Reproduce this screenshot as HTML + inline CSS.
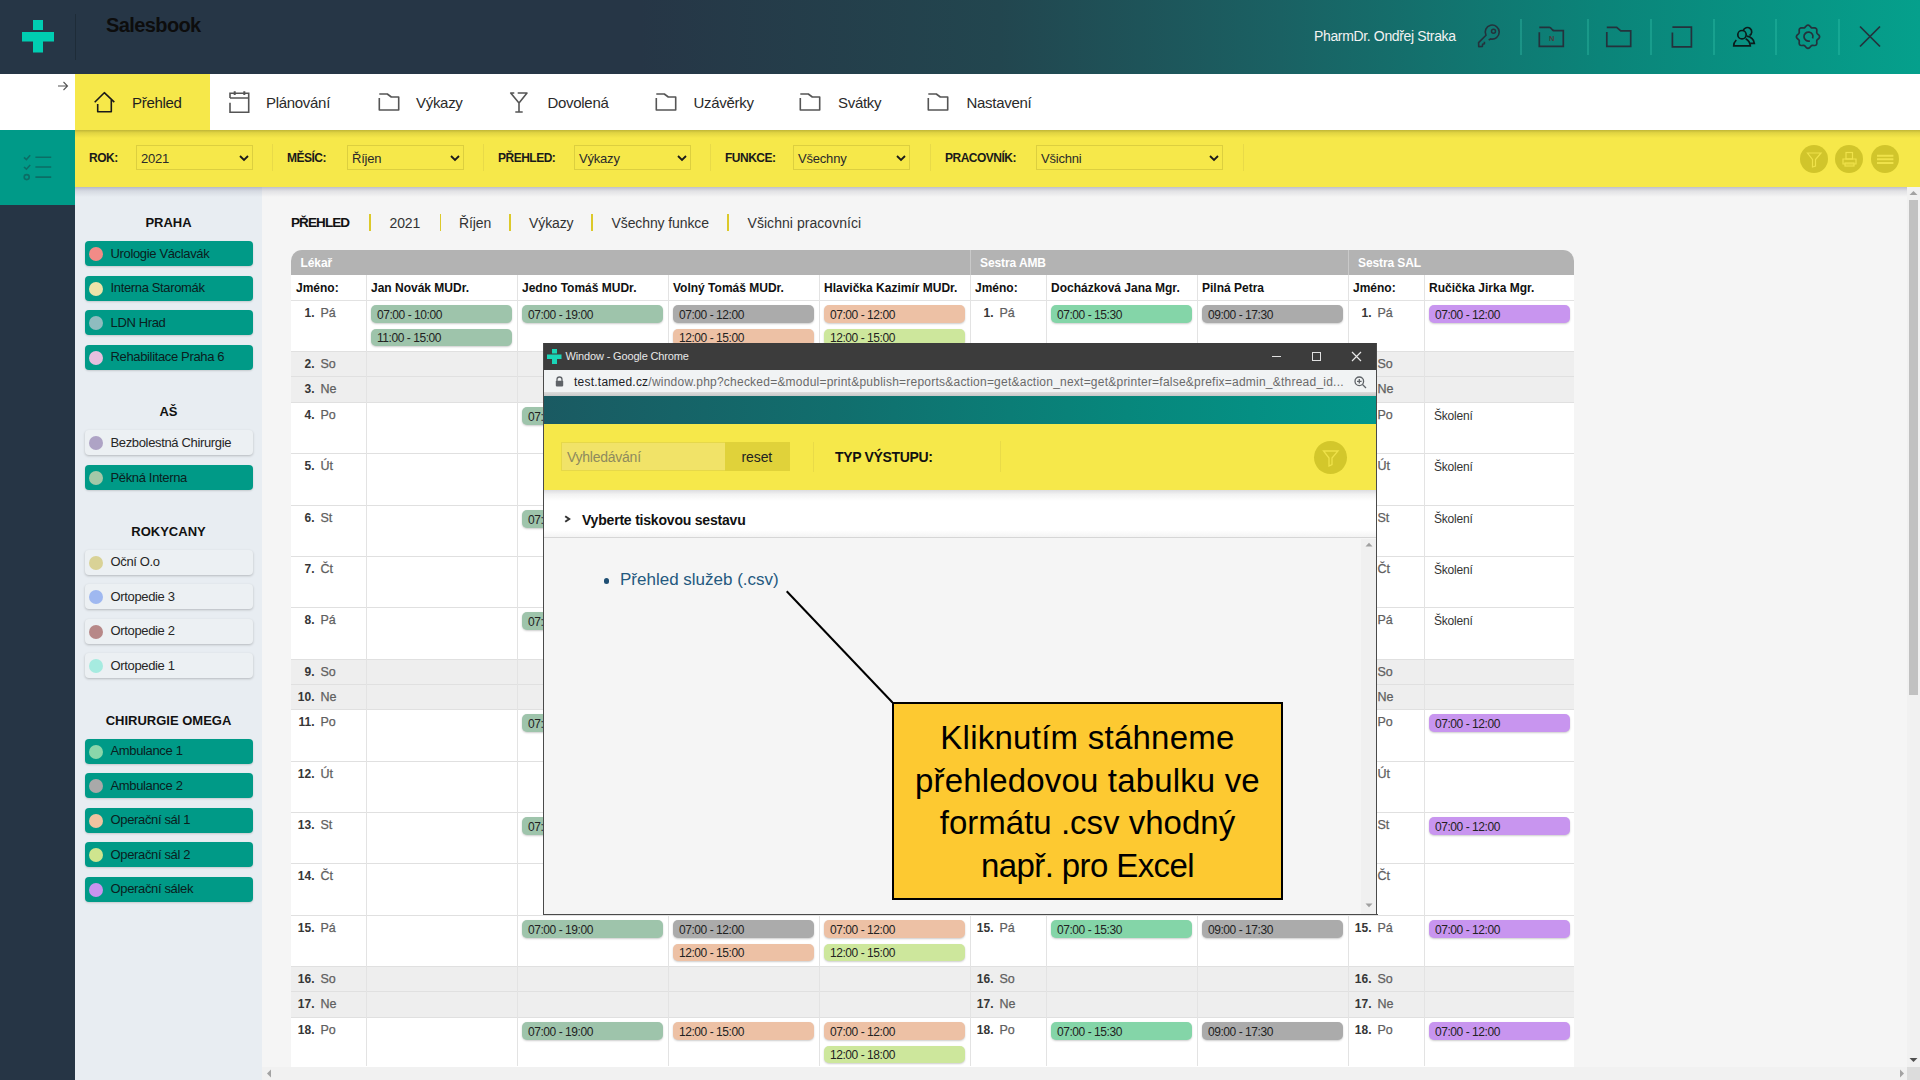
<!DOCTYPE html><html><head><meta charset="utf-8"><style>
html,body{margin:0;padding:0;}
body{width:1920px;height:1080px;overflow:hidden;position:relative;font-family:"Liberation Sans",sans-serif;background:#f5f5f5;}
.t{position:absolute;white-space:nowrap;line-height:1;}
.r{position:absolute;}
svg{position:absolute;overflow:visible;}
</style></head><body>
<div class="r" style="left:0px;top:0px;width:1920px;height:74px;background:linear-gradient(90deg,#263646 0px,#263646 640px,#22464f 1000px,#1a6163 1280px,#0b8479 1600px,#05a08c 1920px);"></div>
<svg style="left:0;top:0" width="80" height="74"><g fill="#00cdb1"><rect x="33" y="20" width="10" height="10"/><rect x="22" y="32" width="32" height="9.5"/><rect x="33" y="41" width="10" height="11.5"/></g></svg>
<div class="r" style="left:75px;top:14px;width:1px;height:46px;background:#1e2c38;"></div>
<div class="t" style="left:106px;top:14.57px;font-size:20px;font-weight:700;color:#0d0d0d;letter-spacing:-0.6px;">Salesbook</div>
<div class="t" style="left:1314px;top:29.45px;font-size:14px;font-weight:400;color:#f2f2f2;letter-spacing:-0.35px;">PharmDr. Ondřej Straka</div>
<div class="r" style="left:1519.5px;top:19px;width:2px;height:36px;background:rgba(60,205,180,0.3);"></div>
<div class="r" style="left:1586.5px;top:19px;width:2px;height:36px;background:rgba(60,205,180,0.3);"></div>
<div class="r" style="left:1649.5px;top:19px;width:2px;height:36px;background:rgba(60,205,180,0.3);"></div>
<div class="r" style="left:1712.5px;top:19px;width:2px;height:36px;background:rgba(60,205,180,0.3);"></div>
<div class="r" style="left:1774.5px;top:19px;width:2px;height:36px;background:rgba(60,205,180,0.3);"></div>
<div class="r" style="left:1837.5px;top:19px;width:2px;height:36px;background:rgba(60,205,180,0.3);"></div>
<svg style="left:1470px;top:18px" width="40" height="36" viewBox="0 0 40 36"><path d="M18.7 22 L20.6 20.9 A7 7 0 1 0 16 17.3 L8.6 24.6 L8.7 28.6 L12.4 28.4 L12.6 26.3 L14.4 25.8 L14.4 23.8" fill="none" stroke="#24323c" stroke-width="1.6" stroke-linejoin="round"/><circle cx="23.5" cy="13.3" r="2" fill="none" stroke="#24323c" stroke-width="1.5"/></svg>
<svg style="left:1530px;top:18px" width="40" height="36" viewBox="0 0 40 36"><path d="M9.3 9.3 H19.3 Q20.5 9.3 21.5 10.8 L22.5 12 Q23.3 12.7 24.5 12.7 H33.3 V28.3 H9.3 V14.3" fill="none" stroke="#24323c" stroke-width="1.7"/><text x="21.7" y="22.8" text-anchor="middle" font-size="7.5" font-weight="700" fill="#4a3c3c" font-family="Liberation Sans">N</text></svg>
<svg style="left:1600px;top:18px" width="40" height="36" viewBox="0 0 40 36"><path d="M6.8 9.4 H16.7 L20.8 12.8 H30.7 V28.4 H6.8 V14.1" fill="none" stroke="#24323c" stroke-width="1.7"/></svg>
<svg style="left:1660px;top:18px" width="40" height="36" viewBox="0 0 40 36"><path d="M12.4 9.1 H31.4 V28.9 H12.4 V14.6" fill="none" stroke="#24323c" stroke-width="1.7"/></svg>
<svg style="left:1724px;top:18px" width="40" height="36" viewBox="0 0 40 36"><g fill="none" stroke="#0b1c1c" stroke-width="1.7"><path d="M19.3 12.6 A4.3 4.3 0 1 1 25.5 17.6"/><circle cx="18" cy="16.7" r="4.2"/><path d="M12.3 22 Q9.7 24.5 9.7 27.9 H26.3 Q26 23 21.7 20.7"/><path d="M23 18.2 Q29.5 19.5 30.3 25.3 H26.3"/></g></svg>
<svg style="left:1788px;top:18px" width="40" height="36" viewBox="0 0 40 36"><g fill="none" stroke="#24323c" stroke-width="1.7"><path d="M20.00,7.10 L20.75,7.26 L21.45,7.69 L22.07,8.30 L22.61,8.94 L23.13,9.48 L23.67,9.83 L24.31,9.97 L25.05,9.95 L25.89,9.89 L26.76,9.89 L27.56,10.08 L28.20,10.50 L28.62,11.14 L28.81,11.94 L28.81,12.81 L28.75,13.65 L28.73,14.39 L28.87,15.03 L29.22,15.57 L29.76,16.09 L30.40,16.63 L31.01,17.25 L31.44,17.95 L31.60,18.70 L31.44,19.45 L31.01,20.15 L30.40,20.77 L29.76,21.31 L29.22,21.83 L28.87,22.37 L28.73,23.01 L28.75,23.75 L28.81,24.59 L28.81,25.46 L28.62,26.26 L28.20,26.90 L27.56,27.32 L26.76,27.51 L25.89,27.51 L25.05,27.45 L24.31,27.43 L23.67,27.57 L23.13,27.92 L22.61,28.46 L22.07,29.10 L21.45,29.71 L20.75,30.14 L20.00,30.30 L19.25,30.14 L18.55,29.71 L17.93,29.10 L17.39,28.46 L16.87,27.92 L16.33,27.57 L15.69,27.43 L14.95,27.45 L14.11,27.51 L13.24,27.51 L12.44,27.32 L11.80,26.90 L11.38,26.26 L11.19,25.46 L11.19,24.59 L11.25,23.75 L11.27,23.01 L11.13,22.37 L10.78,21.83 L10.24,21.31 L9.60,20.77 L8.99,20.15 L8.56,19.45 L8.40,18.70 L8.56,17.95 L8.99,17.25 L9.60,16.63 L10.24,16.09 L10.78,15.57 L11.13,15.03 L11.27,14.39 L11.25,13.65 L11.19,12.81 L11.19,11.94 L11.38,11.14 L11.80,10.50 L12.44,10.08 L13.24,9.89 L14.11,9.89 L14.95,9.95 L15.69,9.97 L16.33,9.83 L16.87,9.48 L17.39,8.94 L17.93,8.30 L18.55,7.69 L19.25,7.26 L20.00,7.10 Z"/><path d="M24.6 20.4 A4.5 4.5 0 1 0 21.8 22.9"/></g></svg>
<svg style="left:1859px;top:26px" width="22" height="21" viewBox="0 0 22 21"><path d="M1 0.5 L21 20.5 M21 0.5 L1 20.5" stroke="#24323c" stroke-width="1.7"/></svg>
<div class="r" style="left:0px;top:74px;width:1920px;height:56px;background:#ffffff;"></div>
<div class="r" style="left:75px;top:74px;width:135px;height:56px;background:#f6e84a;"></div>
<svg style="left:57px;top:81px" width="12" height="10" viewBox="0 0 12 10"><path d="M1 5 H10.5 M6.5 1 L10.5 5 L6.5 9" fill="none" stroke="#555" stroke-width="1.1"/></svg>
<svg style="left:88px;top:84px" width="36" height="36" viewBox="0 0 36 36"><path d="M6.7 18.3 L16.3 8.7 L26.3 18.2 M9.7 20 V27.7 H23.3 V16" fill="none" stroke="#1a1a1a" stroke-width="1.6" stroke-linejoin="round"/></svg>
<div class="t" style="left:132px;top:94.80px;font-size:15px;font-weight:400;color:#1e1e1e;letter-spacing:-0.3px;">Přehled</div>
<svg style="left:222px;top:84px" width="36" height="36" viewBox="0 0 36 36"><g fill="none" stroke="#555555" stroke-width="1.6"><path d="M8 14 V9.3 H26.7 V28.3 H8 V18.7 M8 14 H26.7"/><path d="M12.7 7.3 V11 M22.3 7.3 V11" stroke-width="2"/></g></svg>
<div class="t" style="left:266px;top:94.80px;font-size:15px;font-weight:400;color:#2a2a2a;letter-spacing:-0.3px;">Plánování</div>
<svg style="left:370.0px;top:84px" width="36" height="36" viewBox="0 0 36 36"><path d="M9.3 10 H17.3 L21.3 13 H28.7 V26 H9.3 V14" fill="none" stroke="#555555" stroke-width="1.6" stroke-linejoin="round"/></svg>
<div class="t" style="left:416px;top:94.80px;font-size:15px;font-weight:400;color:#2a2a2a;letter-spacing:-0.3px;">Výkazy</div>
<svg style="left:500px;top:84px" width="36" height="36" viewBox="0 0 36 36"><path d="M14.3 9 H10.7 L19 19 L27 9 H17.7 M19 19 V28 M15.3 28 H22.7" fill="none" stroke="#555555" stroke-width="1.6" stroke-linejoin="round"/></svg>
<div class="t" style="left:547.5px;top:94.80px;font-size:15px;font-weight:400;color:#2a2a2a;letter-spacing:-0.3px;">Dovolená</div>
<svg style="left:646.7px;top:84px" width="36" height="36" viewBox="0 0 36 36"><path d="M9.3 10 H17.3 L21.3 13 H28.7 V26 H9.3 V14" fill="none" stroke="#555555" stroke-width="1.6" stroke-linejoin="round"/></svg>
<div class="t" style="left:693.5px;top:94.80px;font-size:15px;font-weight:400;color:#2a2a2a;letter-spacing:-0.3px;">Uzávěrky</div>
<svg style="left:790.7px;top:84px" width="36" height="36" viewBox="0 0 36 36"><path d="M9.3 10 H17.3 L21.3 13 H28.7 V26 H9.3 V14" fill="none" stroke="#555555" stroke-width="1.6" stroke-linejoin="round"/></svg>
<div class="t" style="left:838px;top:94.80px;font-size:15px;font-weight:400;color:#2a2a2a;letter-spacing:-0.3px;">Svátky</div>
<svg style="left:919.1px;top:84px" width="36" height="36" viewBox="0 0 36 36"><path d="M9.3 10 H17.3 L21.3 13 H28.7 V26 H9.3 V14" fill="none" stroke="#555555" stroke-width="1.6" stroke-linejoin="round"/></svg>
<div class="t" style="left:966.5px;top:94.80px;font-size:15px;font-weight:400;color:#2a2a2a;letter-spacing:-0.3px;">Nastavení</div>
<div class="r" style="left:0px;top:130px;width:75px;height:75px;background:#009a88;"></div>
<div class="r" style="left:0px;top:205px;width:75px;height:875px;background:#263545;"></div>
<svg style="left:15px;top:145px" width="45" height="45" viewBox="0 0 45 45"><g fill="none" stroke="#0b6e66" stroke-width="1.6"><path d="M9 12.3 L11.4 14.5 L15.2 10.3"/><path d="M9 22 L11.4 24.2 L15.2 20"/><circle cx="11.7" cy="32.1" r="2.5"/><path d="M20.4 12.3 H36.2 M20.4 22 H36.2 M20.4 32.1 H36.2"/></g></svg>
<div class="r" style="left:75px;top:187px;width:187px;height:893px;background:#e8edf2;"></div>
<div class="r" style="left:262px;top:187px;width:1658px;height:893px;background:#f5f5f5;"></div>
<div class="r" style="left:75px;top:130px;width:1845px;height:57px;background:#f6e84a;"></div>
<div class="r" style="left:75px;top:130px;width:1845px;height:8px;background:linear-gradient(rgba(40,40,0,0.26),rgba(40,40,0,0.10) 35%,rgba(0,0,0,0));"></div>
<div class="r" style="left:75px;top:187px;width:1845px;height:10px;background:linear-gradient(rgba(50,50,90,0.28),rgba(50,50,80,0.10) 40%,rgba(0,0,0,0));"></div>
<div class="t" style="left:89px;top:152.34px;font-size:12px;font-weight:700;color:#1a1a1a;letter-spacing:-0.5px;">ROK:</div>
<div class="r" style="left:136px;top:145px;width:117px;height:25px;box-sizing:border-box;border:1px solid #dccf3f;background:#f6e84a;"></div>
<div class="t" style="left:141px;top:151.50px;font-size:13px;font-weight:400;color:#2a2a2a;letter-spacing:-0.2px;">2021</div>
<svg style="left:239px;top:155px" width="10" height="7" viewBox="0 0 10 7"><path d="M1 1 L5 5 L9 1" fill="none" stroke="#1a1a1a" stroke-width="1.8"/></svg>
<div class="t" style="left:287px;top:152.34px;font-size:12px;font-weight:700;color:#1a1a1a;letter-spacing:-0.5px;">MĚSÍC:</div>
<div class="r" style="left:347px;top:145px;width:117px;height:25px;box-sizing:border-box;border:1px solid #dccf3f;background:#f6e84a;"></div>
<div class="t" style="left:352px;top:151.50px;font-size:13px;font-weight:400;color:#2a2a2a;letter-spacing:-0.2px;">Říjen</div>
<svg style="left:450px;top:155px" width="10" height="7" viewBox="0 0 10 7"><path d="M1 1 L5 5 L9 1" fill="none" stroke="#1a1a1a" stroke-width="1.8"/></svg>
<div class="t" style="left:498px;top:152.34px;font-size:12px;font-weight:700;color:#1a1a1a;letter-spacing:-0.5px;">PŘEHLED:</div>
<div class="r" style="left:574px;top:145px;width:117px;height:25px;box-sizing:border-box;border:1px solid #dccf3f;background:#f6e84a;"></div>
<div class="t" style="left:579px;top:151.50px;font-size:13px;font-weight:400;color:#2a2a2a;letter-spacing:-0.2px;">Výkazy</div>
<svg style="left:677px;top:155px" width="10" height="7" viewBox="0 0 10 7"><path d="M1 1 L5 5 L9 1" fill="none" stroke="#1a1a1a" stroke-width="1.8"/></svg>
<div class="t" style="left:725px;top:152.34px;font-size:12px;font-weight:700;color:#1a1a1a;letter-spacing:-0.5px;">FUNKCE:</div>
<div class="r" style="left:793px;top:145px;width:117px;height:25px;box-sizing:border-box;border:1px solid #dccf3f;background:#f6e84a;"></div>
<div class="t" style="left:798px;top:151.50px;font-size:13px;font-weight:400;color:#2a2a2a;letter-spacing:-0.2px;">Všechny</div>
<svg style="left:896px;top:155px" width="10" height="7" viewBox="0 0 10 7"><path d="M1 1 L5 5 L9 1" fill="none" stroke="#1a1a1a" stroke-width="1.8"/></svg>
<div class="t" style="left:945px;top:152.34px;font-size:12px;font-weight:700;color:#1a1a1a;letter-spacing:-0.5px;">PRACOVNÍK:</div>
<div class="r" style="left:1036px;top:145px;width:187px;height:25px;box-sizing:border-box;border:1px solid #dccf3f;background:#f6e84a;"></div>
<div class="t" style="left:1041px;top:151.50px;font-size:13px;font-weight:400;color:#2a2a2a;letter-spacing:-0.2px;">Všichni</div>
<svg style="left:1209px;top:155px" width="10" height="7" viewBox="0 0 10 7"><path d="M1 1 L5 5 L9 1" fill="none" stroke="#1a1a1a" stroke-width="1.8"/></svg>
<div class="r" style="left:272px;top:144px;width:1px;height:27px;background:#e8da48;"></div>
<div class="r" style="left:483px;top:144px;width:1px;height:27px;background:#e8da48;"></div>
<div class="r" style="left:710px;top:144px;width:1px;height:27px;background:#e8da48;"></div>
<div class="r" style="left:930px;top:144px;width:1px;height:27px;background:#e8da48;"></div>
<div class="r" style="left:1243px;top:144px;width:1px;height:27px;background:#e8da48;"></div>
<svg style="left:1799.5px;top:145px" width="28" height="28" viewBox="0 0 28 28"><circle cx="14" cy="14" r="14" fill="#d1c52b"/><path d="M7.5 8 H21 L15.5 14.5 V21 L12.5 22 V14.5 Z" fill="none" stroke="#efe24a" stroke-width="1.2"/></svg>
<svg style="left:1834.5px;top:145px" width="28" height="28" viewBox="0 0 28 28"><circle cx="14" cy="14" r="14" fill="#d1c52b"/><g fill="none" stroke="#efe24a" stroke-width="1.2"><rect x="11" y="7.5" width="6.5" height="6.5"/><path d="M8 14 H21 V19 H8 Z"/><rect x="10" y="18" width="9" height="3"/></g></svg>
<svg style="left:1871px;top:145px" width="28" height="28" viewBox="0 0 28 28"><circle cx="14" cy="14" r="14" fill="#d1c52b"/><g stroke="#efe24a" stroke-width="1.9"><path d="M6 10.8 H22.4 M6 14.3 H22.4 M6 18 H22.4"/></g></svg>
<div class="t" style="left:168.5px;top:216.00px;font-size:13px;font-weight:700;color:#111;letter-spacing:0px;transform:translateX(-50%);">PRAHA</div>
<div class="r" style="left:85px;top:241.0px;width:168px;height:25px;background:#009a87;border-radius:4px;box-shadow:0 1px 2px rgba(0,0,0,0.15);"></div>
<div class="r" style="left:89px;top:247.0px;width:14px;height:14px;background:#f28b87;border-radius:50%;"></div>
<div class="t" style="left:110.5px;top:246.50px;font-size:13px;font-weight:400;color:#0a2020;letter-spacing:-0.35px;">Urologie Václavák</div>
<div class="r" style="left:85px;top:275.6px;width:168px;height:25px;background:#009a87;border-radius:4px;box-shadow:0 1px 2px rgba(0,0,0,0.15);"></div>
<div class="r" style="left:89px;top:281.6px;width:14px;height:14px;background:#ede3a9;border-radius:50%;"></div>
<div class="t" style="left:110.5px;top:281.10px;font-size:13px;font-weight:400;color:#0a2020;letter-spacing:-0.35px;">Interna Staromák</div>
<div class="r" style="left:85px;top:310.2px;width:168px;height:25px;background:#009a87;border-radius:4px;box-shadow:0 1px 2px rgba(0,0,0,0.15);"></div>
<div class="r" style="left:89px;top:316.2px;width:14px;height:14px;background:#8fbcbf;border-radius:50%;"></div>
<div class="t" style="left:110.5px;top:315.70px;font-size:13px;font-weight:400;color:#0a2020;letter-spacing:-0.35px;">LDN Hrad</div>
<div class="r" style="left:85px;top:344.8px;width:168px;height:25px;background:#009a87;border-radius:4px;box-shadow:0 1px 2px rgba(0,0,0,0.15);"></div>
<div class="r" style="left:89px;top:350.8px;width:14px;height:14px;background:#e8bfdf;border-radius:50%;"></div>
<div class="t" style="left:110.5px;top:350.30px;font-size:13px;font-weight:400;color:#0a2020;letter-spacing:-0.35px;">Rehabilitace Praha 6</div>
<div class="t" style="left:168.5px;top:405.00px;font-size:13px;font-weight:700;color:#111;letter-spacing:0px;transform:translateX(-50%);">AŠ</div>
<div class="r" style="left:85px;top:430px;width:168px;height:25px;background:#ecf0f3;border-radius:4px;box-shadow:0 1px 2.5px rgba(0,0,0,0.22);"></div>
<div class="r" style="left:89px;top:436px;width:14px;height:14px;background:#aea3c5;border-radius:50%;"></div>
<div class="t" style="left:110.5px;top:435.50px;font-size:13px;font-weight:400;color:#262626;letter-spacing:-0.35px;">Bezbolestná Chirurgie</div>
<div class="r" style="left:85px;top:465px;width:168px;height:25px;background:#009a87;border-radius:4px;box-shadow:0 1px 2px rgba(0,0,0,0.15);"></div>
<div class="r" style="left:89px;top:471px;width:14px;height:14px;background:#a4c8a8;border-radius:50%;"></div>
<div class="t" style="left:110.5px;top:470.50px;font-size:13px;font-weight:400;color:#0a2020;letter-spacing:-0.35px;">Pěkná Interna</div>
<div class="t" style="left:168.5px;top:525.00px;font-size:13px;font-weight:700;color:#111;letter-spacing:0px;transform:translateX(-50%);">ROKYCANY</div>
<div class="r" style="left:85px;top:549.5px;width:168px;height:25px;background:#ecf0f3;border-radius:4px;box-shadow:0 1px 2.5px rgba(0,0,0,0.22);"></div>
<div class="r" style="left:89px;top:555.5px;width:14px;height:14px;background:#d9d296;border-radius:50%;"></div>
<div class="t" style="left:110.5px;top:555.00px;font-size:13px;font-weight:400;color:#262626;letter-spacing:-0.35px;">Oční O.o</div>
<div class="r" style="left:85px;top:584.1px;width:168px;height:25px;background:#ecf0f3;border-radius:4px;box-shadow:0 1px 2.5px rgba(0,0,0,0.22);"></div>
<div class="r" style="left:89px;top:590.1px;width:14px;height:14px;background:#9fb8f0;border-radius:50%;"></div>
<div class="t" style="left:110.5px;top:589.60px;font-size:13px;font-weight:400;color:#262626;letter-spacing:-0.35px;">Ortopedie 3</div>
<div class="r" style="left:85px;top:618.7px;width:168px;height:25px;background:#ecf0f3;border-radius:4px;box-shadow:0 1px 2.5px rgba(0,0,0,0.22);"></div>
<div class="r" style="left:89px;top:624.7px;width:14px;height:14px;background:#b78888;border-radius:50%;"></div>
<div class="t" style="left:110.5px;top:624.20px;font-size:13px;font-weight:400;color:#262626;letter-spacing:-0.35px;">Ortopedie 2</div>
<div class="r" style="left:85px;top:653.3px;width:168px;height:25px;background:#ecf0f3;border-radius:4px;box-shadow:0 1px 2.5px rgba(0,0,0,0.22);"></div>
<div class="r" style="left:89px;top:659.3px;width:14px;height:14px;background:#a6ebe0;border-radius:50%;"></div>
<div class="t" style="left:110.5px;top:658.80px;font-size:13px;font-weight:400;color:#262626;letter-spacing:-0.35px;">Ortopedie 1</div>
<div class="t" style="left:168.5px;top:714.00px;font-size:13px;font-weight:700;color:#111;letter-spacing:0px;transform:translateX(-50%);">CHIRURGIE OMEGA</div>
<div class="r" style="left:85px;top:738.5px;width:168px;height:25px;background:#009a87;border-radius:4px;box-shadow:0 1px 2px rgba(0,0,0,0.15);"></div>
<div class="r" style="left:89px;top:744.5px;width:14px;height:14px;background:#8ad6aa;border-radius:50%;"></div>
<div class="t" style="left:110.5px;top:744.00px;font-size:13px;font-weight:400;color:#0a2020;letter-spacing:-0.35px;">Ambulance 1</div>
<div class="r" style="left:85px;top:773.1px;width:168px;height:25px;background:#009a87;border-radius:4px;box-shadow:0 1px 2px rgba(0,0,0,0.15);"></div>
<div class="r" style="left:89px;top:779.1px;width:14px;height:14px;background:#a9a9a9;border-radius:50%;"></div>
<div class="t" style="left:110.5px;top:778.60px;font-size:13px;font-weight:400;color:#0a2020;letter-spacing:-0.35px;">Ambulance 2</div>
<div class="r" style="left:85px;top:807.7px;width:168px;height:25px;background:#009a87;border-radius:4px;box-shadow:0 1px 2px rgba(0,0,0,0.15);"></div>
<div class="r" style="left:89px;top:813.7px;width:14px;height:14px;background:#f0c3a0;border-radius:50%;"></div>
<div class="t" style="left:110.5px;top:813.20px;font-size:13px;font-weight:400;color:#0a2020;letter-spacing:-0.35px;">Operační sál 1</div>
<div class="r" style="left:85px;top:842.3px;width:168px;height:25px;background:#009a87;border-radius:4px;box-shadow:0 1px 2px rgba(0,0,0,0.15);"></div>
<div class="r" style="left:89px;top:848.3px;width:14px;height:14px;background:#cfe58e;border-radius:50%;"></div>
<div class="t" style="left:110.5px;top:847.80px;font-size:13px;font-weight:400;color:#0a2020;letter-spacing:-0.35px;">Operační sál 2</div>
<div class="r" style="left:85px;top:876.9px;width:168px;height:25px;background:#009a87;border-radius:4px;box-shadow:0 1px 2px rgba(0,0,0,0.15);"></div>
<div class="r" style="left:89px;top:882.9px;width:14px;height:14px;background:#c993ef;border-radius:50%;"></div>
<div class="t" style="left:110.5px;top:882.40px;font-size:13px;font-weight:400;color:#0a2020;letter-spacing:-0.35px;">Operační sálek</div>
<div class="t" style="left:291px;top:216.07px;font-size:13.5px;font-weight:700;color:#111;letter-spacing:-0.9px;">PŘEHLED</div>
<div class="t" style="left:389.5px;top:215.65px;font-size:14px;font-weight:400;color:#333;letter-spacing:-0.1px;">2021</div>
<div class="t" style="left:459px;top:215.65px;font-size:14px;font-weight:400;color:#333;letter-spacing:-0.1px;">Říjen</div>
<div class="t" style="left:529px;top:215.65px;font-size:14px;font-weight:400;color:#333;letter-spacing:-0.1px;">Výkazy</div>
<div class="t" style="left:611.5px;top:215.65px;font-size:14px;font-weight:400;color:#333;letter-spacing:-0.1px;">Všechny funkce</div>
<div class="t" style="left:747.5px;top:215.65px;font-size:14px;font-weight:400;color:#333;letter-spacing:0.05px;">Všichni pracovníci</div>
<div class="r" style="left:369.0px;top:214px;width:1.6px;height:17px;background:#dcc92a;"></div>
<div class="r" style="left:439.5px;top:214px;width:1.6px;height:17px;background:#dcc92a;"></div>
<div class="r" style="left:509.0px;top:214px;width:1.6px;height:17px;background:#dcc92a;"></div>
<div class="r" style="left:591.0px;top:214px;width:1.6px;height:17px;background:#dcc92a;"></div>
<div class="r" style="left:727.0px;top:214px;width:1.6px;height:17px;background:#dcc92a;"></div>
<div class="r" style="left:291px;top:250px;width:1283px;height:25px;background:#b3b3b3;border-radius:11px 11px 0 0;"></div>
<div class="r" style="left:970px;top:250px;width:1px;height:25px;background:#c9c9c9;"></div>
<div class="r" style="left:1348px;top:250px;width:1px;height:25px;background:#c9c9c9;"></div>
<div class="t" style="left:300.5px;top:256.84px;font-size:12px;font-weight:700;color:#ffffff;letter-spacing:-0.1px;">Lékař</div>
<div class="t" style="left:980px;top:256.84px;font-size:12px;font-weight:700;color:#ffffff;letter-spacing:-0.1px;">Sestra AMB</div>
<div class="t" style="left:1358px;top:256.84px;font-size:12px;font-weight:700;color:#ffffff;letter-spacing:-0.1px;">Sestra SAL</div>
<div class="r" style="left:291px;top:275px;width:1283px;height:25px;background:#ffffff;"></div>
<div class="t" style="left:296px;top:281.84px;font-size:12px;font-weight:700;color:#111;letter-spacing:0px;">Jméno:</div>
<div class="t" style="left:371px;top:281.84px;font-size:12px;font-weight:700;color:#111;letter-spacing:0px;">Jan Novák MUDr.</div>
<div class="t" style="left:522px;top:281.84px;font-size:12px;font-weight:700;color:#111;letter-spacing:0px;">Jedno Tomáš MUDr.</div>
<div class="t" style="left:673px;top:281.84px;font-size:12px;font-weight:700;color:#111;letter-spacing:0px;">Volný Tomáš MUDr.</div>
<div class="t" style="left:824px;top:281.84px;font-size:12px;font-weight:700;color:#111;letter-spacing:0px;">Hlavička Kazimír MUDr.</div>
<div class="t" style="left:975px;top:281.84px;font-size:12px;font-weight:700;color:#111;letter-spacing:0px;">Jméno:</div>
<div class="t" style="left:1051px;top:281.84px;font-size:12px;font-weight:700;color:#111;letter-spacing:0px;">Docházková Jana Mgr.</div>
<div class="t" style="left:1202px;top:281.84px;font-size:12px;font-weight:700;color:#111;letter-spacing:0px;">Pilná Petra</div>
<div class="t" style="left:1353px;top:281.84px;font-size:12px;font-weight:700;color:#111;letter-spacing:0px;">Jméno:</div>
<div class="t" style="left:1429px;top:281.84px;font-size:12px;font-weight:700;color:#111;letter-spacing:0px;">Ručička Jirka Mgr.</div>
<div class="r" style="left:291px;top:300px;width:1283px;height:1px;background:#e2e2e2;"></div>
<div class="r" style="left:291px;top:301px;width:1283px;height:50px;background:#ffffff;"></div>
<div class="r" style="left:291px;top:351px;width:1283px;height:1px;background:#e0e0e0;"></div>
<div class="t" style="left:295px;width:19.5px;text-align:right;top:306.82px;font-size:12px;font-weight:700;color:#363636;">1.</div>
<div class="t" style="left:320.5px;top:306.82px;font-size:12.5px;font-weight:400;color:#606060;letter-spacing:-0.1px;-webkit-text-stroke:0.25px #606060;">Pá</div>
<div class="t" style="left:974px;width:19.5px;text-align:right;top:306.82px;font-size:12px;font-weight:700;color:#363636;">1.</div>
<div class="t" style="left:999.5px;top:306.82px;font-size:12.5px;font-weight:400;color:#606060;letter-spacing:-0.1px;-webkit-text-stroke:0.25px #606060;">Pá</div>
<div class="t" style="left:1352px;width:19.5px;text-align:right;top:306.82px;font-size:12px;font-weight:700;color:#363636;">1.</div>
<div class="t" style="left:1377.5px;top:306.82px;font-size:12.5px;font-weight:400;color:#606060;letter-spacing:-0.1px;-webkit-text-stroke:0.25px #606060;">Pá</div>
<div class="r" style="left:371px;top:305.3px;width:141px;height:17.8px;background:#9ec4ab;border-radius:5px;box-shadow:0 1px 2px rgba(0,0,0,0.2);"></div>
<div class="t" style="left:377px;top:308.94px;font-size:12px;font-weight:400;color:#222;letter-spacing:-0.45px;">07:00 - 10:00</div>
<div class="r" style="left:371px;top:328.6px;width:141px;height:17.8px;background:#9ec4ab;border-radius:5px;box-shadow:0 1px 2px rgba(0,0,0,0.2);"></div>
<div class="t" style="left:377px;top:332.24px;font-size:12px;font-weight:400;color:#222;letter-spacing:-0.45px;">11:00 - 15:00</div>
<div class="r" style="left:522px;top:305.3px;width:141px;height:17.8px;background:#9ec4ab;border-radius:5px;box-shadow:0 1px 2px rgba(0,0,0,0.2);"></div>
<div class="t" style="left:528px;top:308.94px;font-size:12px;font-weight:400;color:#222;letter-spacing:-0.45px;">07:00 - 19:00</div>
<div class="r" style="left:673px;top:305.3px;width:141px;height:17.8px;background:#ababab;border-radius:5px;box-shadow:0 1px 2px rgba(0,0,0,0.2);"></div>
<div class="t" style="left:679px;top:308.94px;font-size:12px;font-weight:400;color:#222;letter-spacing:-0.45px;">07:00 - 12:00</div>
<div class="r" style="left:673px;top:328.6px;width:141px;height:17.8px;background:#edc1a5;border-radius:5px;box-shadow:0 1px 2px rgba(0,0,0,0.2);"></div>
<div class="t" style="left:679px;top:332.24px;font-size:12px;font-weight:400;color:#222;letter-spacing:-0.45px;">12:00 - 15:00</div>
<div class="r" style="left:824px;top:305.3px;width:141px;height:17.8px;background:#edc1a5;border-radius:5px;box-shadow:0 1px 2px rgba(0,0,0,0.2);"></div>
<div class="t" style="left:830px;top:308.94px;font-size:12px;font-weight:400;color:#222;letter-spacing:-0.45px;">07:00 - 12:00</div>
<div class="r" style="left:824px;top:328.6px;width:141px;height:17.8px;background:#cde79c;border-radius:5px;box-shadow:0 1px 2px rgba(0,0,0,0.2);"></div>
<div class="t" style="left:830px;top:332.24px;font-size:12px;font-weight:400;color:#222;letter-spacing:-0.45px;">12:00 - 15:00</div>
<div class="r" style="left:1051px;top:305.3px;width:141px;height:17.8px;background:#84d5a8;border-radius:5px;box-shadow:0 1px 2px rgba(0,0,0,0.2);"></div>
<div class="t" style="left:1057px;top:308.94px;font-size:12px;font-weight:400;color:#222;letter-spacing:-0.45px;">07:00 - 15:30</div>
<div class="r" style="left:1202px;top:305.3px;width:141px;height:17.8px;background:#ababab;border-radius:5px;box-shadow:0 1px 2px rgba(0,0,0,0.2);"></div>
<div class="t" style="left:1208px;top:308.94px;font-size:12px;font-weight:400;color:#222;letter-spacing:-0.45px;">09:00 - 17:30</div>
<div class="r" style="left:1429px;top:305.3px;width:141px;height:17.8px;background:#c895ef;border-radius:5px;box-shadow:0 1px 2px rgba(0,0,0,0.2);"></div>
<div class="t" style="left:1435px;top:308.94px;font-size:12px;font-weight:400;color:#222;letter-spacing:-0.45px;">07:00 - 12:00</div>
<div class="r" style="left:291px;top:352px;width:1283px;height:24px;background:#eeeeee;"></div>
<div class="r" style="left:291px;top:376px;width:1283px;height:1px;background:#e0e0e0;"></div>
<div class="t" style="left:295px;width:19.5px;text-align:right;top:357.82px;font-size:12px;font-weight:700;color:#363636;">2.</div>
<div class="t" style="left:320.5px;top:357.82px;font-size:12.5px;font-weight:400;color:#606060;letter-spacing:-0.1px;-webkit-text-stroke:0.25px #606060;">So</div>
<div class="t" style="left:974px;width:19.5px;text-align:right;top:357.82px;font-size:12px;font-weight:700;color:#363636;">2.</div>
<div class="t" style="left:999.5px;top:357.82px;font-size:12.5px;font-weight:400;color:#606060;letter-spacing:-0.1px;-webkit-text-stroke:0.25px #606060;">So</div>
<div class="t" style="left:1352px;width:19.5px;text-align:right;top:357.82px;font-size:12px;font-weight:700;color:#363636;">2.</div>
<div class="t" style="left:1377.5px;top:357.82px;font-size:12.5px;font-weight:400;color:#606060;letter-spacing:-0.1px;-webkit-text-stroke:0.25px #606060;">So</div>
<div class="r" style="left:291px;top:377px;width:1283px;height:25px;background:#eeeeee;"></div>
<div class="r" style="left:291px;top:402px;width:1283px;height:1px;background:#e0e0e0;"></div>
<div class="t" style="left:295px;width:19.5px;text-align:right;top:382.82px;font-size:12px;font-weight:700;color:#363636;">3.</div>
<div class="t" style="left:320.5px;top:382.82px;font-size:12.5px;font-weight:400;color:#606060;letter-spacing:-0.1px;-webkit-text-stroke:0.25px #606060;">Ne</div>
<div class="t" style="left:974px;width:19.5px;text-align:right;top:382.82px;font-size:12px;font-weight:700;color:#363636;">3.</div>
<div class="t" style="left:999.5px;top:382.82px;font-size:12.5px;font-weight:400;color:#606060;letter-spacing:-0.1px;-webkit-text-stroke:0.25px #606060;">Ne</div>
<div class="t" style="left:1352px;width:19.5px;text-align:right;top:382.82px;font-size:12px;font-weight:700;color:#363636;">3.</div>
<div class="t" style="left:1377.5px;top:382.82px;font-size:12.5px;font-weight:400;color:#606060;letter-spacing:-0.1px;-webkit-text-stroke:0.25px #606060;">Ne</div>
<div class="r" style="left:291px;top:403px;width:1283px;height:50px;background:#ffffff;"></div>
<div class="r" style="left:291px;top:453px;width:1283px;height:1px;background:#e0e0e0;"></div>
<div class="t" style="left:295px;width:19.5px;text-align:right;top:408.82px;font-size:12px;font-weight:700;color:#363636;">4.</div>
<div class="t" style="left:320.5px;top:408.82px;font-size:12.5px;font-weight:400;color:#606060;letter-spacing:-0.1px;-webkit-text-stroke:0.25px #606060;">Po</div>
<div class="t" style="left:974px;width:19.5px;text-align:right;top:408.82px;font-size:12px;font-weight:700;color:#363636;">4.</div>
<div class="t" style="left:999.5px;top:408.82px;font-size:12.5px;font-weight:400;color:#606060;letter-spacing:-0.1px;-webkit-text-stroke:0.25px #606060;">Po</div>
<div class="t" style="left:1352px;width:19.5px;text-align:right;top:408.82px;font-size:12px;font-weight:700;color:#363636;">4.</div>
<div class="t" style="left:1377.5px;top:408.82px;font-size:12.5px;font-weight:400;color:#606060;letter-spacing:-0.1px;-webkit-text-stroke:0.25px #606060;">Po</div>
<div class="r" style="left:522px;top:407.3px;width:141px;height:17.8px;background:#9ec4ab;border-radius:5px;box-shadow:0 1px 2px rgba(0,0,0,0.2);"></div>
<div class="t" style="left:528px;top:410.94px;font-size:12px;font-weight:400;color:#222;letter-spacing:-0.45px;">07:00 - 19:00</div>
<div class="t" style="left:1434px;top:409.84px;font-size:12px;font-weight:400;color:#333;letter-spacing:-0.2px;">Školení</div>
<div class="r" style="left:291px;top:454px;width:1283px;height:51px;background:#ffffff;"></div>
<div class="r" style="left:291px;top:505px;width:1283px;height:1px;background:#e0e0e0;"></div>
<div class="t" style="left:295px;width:19.5px;text-align:right;top:459.82px;font-size:12px;font-weight:700;color:#363636;">5.</div>
<div class="t" style="left:320.5px;top:459.82px;font-size:12.5px;font-weight:400;color:#606060;letter-spacing:-0.1px;-webkit-text-stroke:0.25px #606060;">Út</div>
<div class="t" style="left:974px;width:19.5px;text-align:right;top:459.82px;font-size:12px;font-weight:700;color:#363636;">5.</div>
<div class="t" style="left:999.5px;top:459.82px;font-size:12.5px;font-weight:400;color:#606060;letter-spacing:-0.1px;-webkit-text-stroke:0.25px #606060;">Út</div>
<div class="t" style="left:1352px;width:19.5px;text-align:right;top:459.82px;font-size:12px;font-weight:700;color:#363636;">5.</div>
<div class="t" style="left:1377.5px;top:459.82px;font-size:12.5px;font-weight:400;color:#606060;letter-spacing:-0.1px;-webkit-text-stroke:0.25px #606060;">Út</div>
<div class="t" style="left:1434px;top:460.84px;font-size:12px;font-weight:400;color:#333;letter-spacing:-0.2px;">Školení</div>
<div class="r" style="left:291px;top:506px;width:1283px;height:50px;background:#ffffff;"></div>
<div class="r" style="left:291px;top:556px;width:1283px;height:1px;background:#e0e0e0;"></div>
<div class="t" style="left:295px;width:19.5px;text-align:right;top:511.82px;font-size:12px;font-weight:700;color:#363636;">6.</div>
<div class="t" style="left:320.5px;top:511.82px;font-size:12.5px;font-weight:400;color:#606060;letter-spacing:-0.1px;-webkit-text-stroke:0.25px #606060;">St</div>
<div class="t" style="left:974px;width:19.5px;text-align:right;top:511.82px;font-size:12px;font-weight:700;color:#363636;">6.</div>
<div class="t" style="left:999.5px;top:511.82px;font-size:12.5px;font-weight:400;color:#606060;letter-spacing:-0.1px;-webkit-text-stroke:0.25px #606060;">St</div>
<div class="t" style="left:1352px;width:19.5px;text-align:right;top:511.82px;font-size:12px;font-weight:700;color:#363636;">6.</div>
<div class="t" style="left:1377.5px;top:511.82px;font-size:12.5px;font-weight:400;color:#606060;letter-spacing:-0.1px;-webkit-text-stroke:0.25px #606060;">St</div>
<div class="r" style="left:522px;top:510.3px;width:141px;height:17.8px;background:#9ec4ab;border-radius:5px;box-shadow:0 1px 2px rgba(0,0,0,0.2);"></div>
<div class="t" style="left:528px;top:513.94px;font-size:12px;font-weight:400;color:#222;letter-spacing:-0.45px;">07:00 - 19:00</div>
<div class="t" style="left:1434px;top:512.84px;font-size:12px;font-weight:400;color:#333;letter-spacing:-0.2px;">Školení</div>
<div class="r" style="left:291px;top:557px;width:1283px;height:50px;background:#ffffff;"></div>
<div class="r" style="left:291px;top:607px;width:1283px;height:1px;background:#e0e0e0;"></div>
<div class="t" style="left:295px;width:19.5px;text-align:right;top:562.82px;font-size:12px;font-weight:700;color:#363636;">7.</div>
<div class="t" style="left:320.5px;top:562.82px;font-size:12.5px;font-weight:400;color:#606060;letter-spacing:-0.1px;-webkit-text-stroke:0.25px #606060;">Čt</div>
<div class="t" style="left:974px;width:19.5px;text-align:right;top:562.82px;font-size:12px;font-weight:700;color:#363636;">7.</div>
<div class="t" style="left:999.5px;top:562.82px;font-size:12.5px;font-weight:400;color:#606060;letter-spacing:-0.1px;-webkit-text-stroke:0.25px #606060;">Čt</div>
<div class="t" style="left:1352px;width:19.5px;text-align:right;top:562.82px;font-size:12px;font-weight:700;color:#363636;">7.</div>
<div class="t" style="left:1377.5px;top:562.82px;font-size:12.5px;font-weight:400;color:#606060;letter-spacing:-0.1px;-webkit-text-stroke:0.25px #606060;">Čt</div>
<div class="t" style="left:1434px;top:563.84px;font-size:12px;font-weight:400;color:#333;letter-spacing:-0.2px;">Školení</div>
<div class="r" style="left:291px;top:608px;width:1283px;height:51px;background:#ffffff;"></div>
<div class="r" style="left:291px;top:659px;width:1283px;height:1px;background:#e0e0e0;"></div>
<div class="t" style="left:295px;width:19.5px;text-align:right;top:613.82px;font-size:12px;font-weight:700;color:#363636;">8.</div>
<div class="t" style="left:320.5px;top:613.82px;font-size:12.5px;font-weight:400;color:#606060;letter-spacing:-0.1px;-webkit-text-stroke:0.25px #606060;">Pá</div>
<div class="t" style="left:974px;width:19.5px;text-align:right;top:613.82px;font-size:12px;font-weight:700;color:#363636;">8.</div>
<div class="t" style="left:999.5px;top:613.82px;font-size:12.5px;font-weight:400;color:#606060;letter-spacing:-0.1px;-webkit-text-stroke:0.25px #606060;">Pá</div>
<div class="t" style="left:1352px;width:19.5px;text-align:right;top:613.82px;font-size:12px;font-weight:700;color:#363636;">8.</div>
<div class="t" style="left:1377.5px;top:613.82px;font-size:12.5px;font-weight:400;color:#606060;letter-spacing:-0.1px;-webkit-text-stroke:0.25px #606060;">Pá</div>
<div class="r" style="left:522px;top:612.3px;width:141px;height:17.8px;background:#9ec4ab;border-radius:5px;box-shadow:0 1px 2px rgba(0,0,0,0.2);"></div>
<div class="t" style="left:528px;top:615.94px;font-size:12px;font-weight:400;color:#222;letter-spacing:-0.45px;">07:00 - 19:00</div>
<div class="t" style="left:1434px;top:614.84px;font-size:12px;font-weight:400;color:#333;letter-spacing:-0.2px;">Školení</div>
<div class="r" style="left:291px;top:660px;width:1283px;height:24px;background:#eeeeee;"></div>
<div class="r" style="left:291px;top:684px;width:1283px;height:1px;background:#e0e0e0;"></div>
<div class="t" style="left:295px;width:19.5px;text-align:right;top:665.82px;font-size:12px;font-weight:700;color:#363636;">9.</div>
<div class="t" style="left:320.5px;top:665.82px;font-size:12.5px;font-weight:400;color:#606060;letter-spacing:-0.1px;-webkit-text-stroke:0.25px #606060;">So</div>
<div class="t" style="left:974px;width:19.5px;text-align:right;top:665.82px;font-size:12px;font-weight:700;color:#363636;">9.</div>
<div class="t" style="left:999.5px;top:665.82px;font-size:12.5px;font-weight:400;color:#606060;letter-spacing:-0.1px;-webkit-text-stroke:0.25px #606060;">So</div>
<div class="t" style="left:1352px;width:19.5px;text-align:right;top:665.82px;font-size:12px;font-weight:700;color:#363636;">9.</div>
<div class="t" style="left:1377.5px;top:665.82px;font-size:12.5px;font-weight:400;color:#606060;letter-spacing:-0.1px;-webkit-text-stroke:0.25px #606060;">So</div>
<div class="r" style="left:291px;top:685px;width:1283px;height:24px;background:#eeeeee;"></div>
<div class="r" style="left:291px;top:709px;width:1283px;height:1px;background:#e0e0e0;"></div>
<div class="t" style="left:295px;width:19.5px;text-align:right;top:690.82px;font-size:12px;font-weight:700;color:#363636;">10.</div>
<div class="t" style="left:320.5px;top:690.82px;font-size:12.5px;font-weight:400;color:#606060;letter-spacing:-0.1px;-webkit-text-stroke:0.25px #606060;">Ne</div>
<div class="t" style="left:974px;width:19.5px;text-align:right;top:690.82px;font-size:12px;font-weight:700;color:#363636;">10.</div>
<div class="t" style="left:999.5px;top:690.82px;font-size:12.5px;font-weight:400;color:#606060;letter-spacing:-0.1px;-webkit-text-stroke:0.25px #606060;">Ne</div>
<div class="t" style="left:1352px;width:19.5px;text-align:right;top:690.82px;font-size:12px;font-weight:700;color:#363636;">10.</div>
<div class="t" style="left:1377.5px;top:690.82px;font-size:12.5px;font-weight:400;color:#606060;letter-spacing:-0.1px;-webkit-text-stroke:0.25px #606060;">Ne</div>
<div class="r" style="left:291px;top:710px;width:1283px;height:51px;background:#ffffff;"></div>
<div class="r" style="left:291px;top:761px;width:1283px;height:1px;background:#e0e0e0;"></div>
<div class="t" style="left:295px;width:19.5px;text-align:right;top:715.82px;font-size:12px;font-weight:700;color:#363636;">11.</div>
<div class="t" style="left:320.5px;top:715.82px;font-size:12.5px;font-weight:400;color:#606060;letter-spacing:-0.1px;-webkit-text-stroke:0.25px #606060;">Po</div>
<div class="t" style="left:974px;width:19.5px;text-align:right;top:715.82px;font-size:12px;font-weight:700;color:#363636;">11.</div>
<div class="t" style="left:999.5px;top:715.82px;font-size:12.5px;font-weight:400;color:#606060;letter-spacing:-0.1px;-webkit-text-stroke:0.25px #606060;">Po</div>
<div class="t" style="left:1352px;width:19.5px;text-align:right;top:715.82px;font-size:12px;font-weight:700;color:#363636;">11.</div>
<div class="t" style="left:1377.5px;top:715.82px;font-size:12.5px;font-weight:400;color:#606060;letter-spacing:-0.1px;-webkit-text-stroke:0.25px #606060;">Po</div>
<div class="r" style="left:522px;top:714.3px;width:141px;height:17.8px;background:#9ec4ab;border-radius:5px;box-shadow:0 1px 2px rgba(0,0,0,0.2);"></div>
<div class="t" style="left:528px;top:717.94px;font-size:12px;font-weight:400;color:#222;letter-spacing:-0.45px;">07:00 - 19:00</div>
<div class="r" style="left:1429px;top:714.3px;width:141px;height:17.8px;background:#c895ef;border-radius:5px;box-shadow:0 1px 2px rgba(0,0,0,0.2);"></div>
<div class="t" style="left:1435px;top:717.94px;font-size:12px;font-weight:400;color:#222;letter-spacing:-0.45px;">07:00 - 12:00</div>
<div class="r" style="left:291px;top:762px;width:1283px;height:50px;background:#ffffff;"></div>
<div class="r" style="left:291px;top:812px;width:1283px;height:1px;background:#e0e0e0;"></div>
<div class="t" style="left:295px;width:19.5px;text-align:right;top:767.82px;font-size:12px;font-weight:700;color:#363636;">12.</div>
<div class="t" style="left:320.5px;top:767.82px;font-size:12.5px;font-weight:400;color:#606060;letter-spacing:-0.1px;-webkit-text-stroke:0.25px #606060;">Út</div>
<div class="t" style="left:974px;width:19.5px;text-align:right;top:767.82px;font-size:12px;font-weight:700;color:#363636;">12.</div>
<div class="t" style="left:999.5px;top:767.82px;font-size:12.5px;font-weight:400;color:#606060;letter-spacing:-0.1px;-webkit-text-stroke:0.25px #606060;">Út</div>
<div class="t" style="left:1352px;width:19.5px;text-align:right;top:767.82px;font-size:12px;font-weight:700;color:#363636;">12.</div>
<div class="t" style="left:1377.5px;top:767.82px;font-size:12.5px;font-weight:400;color:#606060;letter-spacing:-0.1px;-webkit-text-stroke:0.25px #606060;">Út</div>
<div class="r" style="left:291px;top:813px;width:1283px;height:50px;background:#ffffff;"></div>
<div class="r" style="left:291px;top:863px;width:1283px;height:1px;background:#e0e0e0;"></div>
<div class="t" style="left:295px;width:19.5px;text-align:right;top:818.82px;font-size:12px;font-weight:700;color:#363636;">13.</div>
<div class="t" style="left:320.5px;top:818.82px;font-size:12.5px;font-weight:400;color:#606060;letter-spacing:-0.1px;-webkit-text-stroke:0.25px #606060;">St</div>
<div class="t" style="left:974px;width:19.5px;text-align:right;top:818.82px;font-size:12px;font-weight:700;color:#363636;">13.</div>
<div class="t" style="left:999.5px;top:818.82px;font-size:12.5px;font-weight:400;color:#606060;letter-spacing:-0.1px;-webkit-text-stroke:0.25px #606060;">St</div>
<div class="t" style="left:1352px;width:19.5px;text-align:right;top:818.82px;font-size:12px;font-weight:700;color:#363636;">13.</div>
<div class="t" style="left:1377.5px;top:818.82px;font-size:12.5px;font-weight:400;color:#606060;letter-spacing:-0.1px;-webkit-text-stroke:0.25px #606060;">St</div>
<div class="r" style="left:522px;top:817.3px;width:141px;height:17.8px;background:#9ec4ab;border-radius:5px;box-shadow:0 1px 2px rgba(0,0,0,0.2);"></div>
<div class="t" style="left:528px;top:820.94px;font-size:12px;font-weight:400;color:#222;letter-spacing:-0.45px;">07:00 - 19:00</div>
<div class="r" style="left:1429px;top:817.3px;width:141px;height:17.8px;background:#c895ef;border-radius:5px;box-shadow:0 1px 2px rgba(0,0,0,0.2);"></div>
<div class="t" style="left:1435px;top:820.94px;font-size:12px;font-weight:400;color:#222;letter-spacing:-0.45px;">07:00 - 12:00</div>
<div class="r" style="left:291px;top:864px;width:1283px;height:51px;background:#ffffff;"></div>
<div class="r" style="left:291px;top:915px;width:1283px;height:1px;background:#e0e0e0;"></div>
<div class="t" style="left:295px;width:19.5px;text-align:right;top:869.82px;font-size:12px;font-weight:700;color:#363636;">14.</div>
<div class="t" style="left:320.5px;top:869.82px;font-size:12.5px;font-weight:400;color:#606060;letter-spacing:-0.1px;-webkit-text-stroke:0.25px #606060;">Čt</div>
<div class="t" style="left:974px;width:19.5px;text-align:right;top:869.82px;font-size:12px;font-weight:700;color:#363636;">14.</div>
<div class="t" style="left:999.5px;top:869.82px;font-size:12.5px;font-weight:400;color:#606060;letter-spacing:-0.1px;-webkit-text-stroke:0.25px #606060;">Čt</div>
<div class="t" style="left:1352px;width:19.5px;text-align:right;top:869.82px;font-size:12px;font-weight:700;color:#363636;">14.</div>
<div class="t" style="left:1377.5px;top:869.82px;font-size:12.5px;font-weight:400;color:#606060;letter-spacing:-0.1px;-webkit-text-stroke:0.25px #606060;">Čt</div>
<div class="r" style="left:291px;top:916px;width:1283px;height:50px;background:#ffffff;"></div>
<div class="r" style="left:291px;top:966px;width:1283px;height:1px;background:#e0e0e0;"></div>
<div class="t" style="left:295px;width:19.5px;text-align:right;top:921.82px;font-size:12px;font-weight:700;color:#363636;">15.</div>
<div class="t" style="left:320.5px;top:921.82px;font-size:12.5px;font-weight:400;color:#606060;letter-spacing:-0.1px;-webkit-text-stroke:0.25px #606060;">Pá</div>
<div class="t" style="left:974px;width:19.5px;text-align:right;top:921.82px;font-size:12px;font-weight:700;color:#363636;">15.</div>
<div class="t" style="left:999.5px;top:921.82px;font-size:12.5px;font-weight:400;color:#606060;letter-spacing:-0.1px;-webkit-text-stroke:0.25px #606060;">Pá</div>
<div class="t" style="left:1352px;width:19.5px;text-align:right;top:921.82px;font-size:12px;font-weight:700;color:#363636;">15.</div>
<div class="t" style="left:1377.5px;top:921.82px;font-size:12.5px;font-weight:400;color:#606060;letter-spacing:-0.1px;-webkit-text-stroke:0.25px #606060;">Pá</div>
<div class="r" style="left:522px;top:920.3px;width:141px;height:17.8px;background:#9ec4ab;border-radius:5px;box-shadow:0 1px 2px rgba(0,0,0,0.2);"></div>
<div class="t" style="left:528px;top:923.94px;font-size:12px;font-weight:400;color:#222;letter-spacing:-0.45px;">07:00 - 19:00</div>
<div class="r" style="left:673px;top:920.3px;width:141px;height:17.8px;background:#ababab;border-radius:5px;box-shadow:0 1px 2px rgba(0,0,0,0.2);"></div>
<div class="t" style="left:679px;top:923.94px;font-size:12px;font-weight:400;color:#222;letter-spacing:-0.45px;">07:00 - 12:00</div>
<div class="r" style="left:673px;top:943.6px;width:141px;height:17.8px;background:#edc1a5;border-radius:5px;box-shadow:0 1px 2px rgba(0,0,0,0.2);"></div>
<div class="t" style="left:679px;top:947.24px;font-size:12px;font-weight:400;color:#222;letter-spacing:-0.45px;">12:00 - 15:00</div>
<div class="r" style="left:824px;top:920.3px;width:141px;height:17.8px;background:#edc1a5;border-radius:5px;box-shadow:0 1px 2px rgba(0,0,0,0.2);"></div>
<div class="t" style="left:830px;top:923.94px;font-size:12px;font-weight:400;color:#222;letter-spacing:-0.45px;">07:00 - 12:00</div>
<div class="r" style="left:824px;top:943.6px;width:141px;height:17.8px;background:#cde79c;border-radius:5px;box-shadow:0 1px 2px rgba(0,0,0,0.2);"></div>
<div class="t" style="left:830px;top:947.24px;font-size:12px;font-weight:400;color:#222;letter-spacing:-0.45px;">12:00 - 15:00</div>
<div class="r" style="left:1051px;top:920.3px;width:141px;height:17.8px;background:#84d5a8;border-radius:5px;box-shadow:0 1px 2px rgba(0,0,0,0.2);"></div>
<div class="t" style="left:1057px;top:923.94px;font-size:12px;font-weight:400;color:#222;letter-spacing:-0.45px;">07:00 - 15:30</div>
<div class="r" style="left:1202px;top:920.3px;width:141px;height:17.8px;background:#ababab;border-radius:5px;box-shadow:0 1px 2px rgba(0,0,0,0.2);"></div>
<div class="t" style="left:1208px;top:923.94px;font-size:12px;font-weight:400;color:#222;letter-spacing:-0.45px;">09:00 - 17:30</div>
<div class="r" style="left:1429px;top:920.3px;width:141px;height:17.8px;background:#c895ef;border-radius:5px;box-shadow:0 1px 2px rgba(0,0,0,0.2);"></div>
<div class="t" style="left:1435px;top:923.94px;font-size:12px;font-weight:400;color:#222;letter-spacing:-0.45px;">07:00 - 12:00</div>
<div class="r" style="left:291px;top:967px;width:1283px;height:24px;background:#eeeeee;"></div>
<div class="r" style="left:291px;top:991px;width:1283px;height:1px;background:#e0e0e0;"></div>
<div class="t" style="left:295px;width:19.5px;text-align:right;top:972.82px;font-size:12px;font-weight:700;color:#363636;">16.</div>
<div class="t" style="left:320.5px;top:972.82px;font-size:12.5px;font-weight:400;color:#606060;letter-spacing:-0.1px;-webkit-text-stroke:0.25px #606060;">So</div>
<div class="t" style="left:974px;width:19.5px;text-align:right;top:972.82px;font-size:12px;font-weight:700;color:#363636;">16.</div>
<div class="t" style="left:999.5px;top:972.82px;font-size:12.5px;font-weight:400;color:#606060;letter-spacing:-0.1px;-webkit-text-stroke:0.25px #606060;">So</div>
<div class="t" style="left:1352px;width:19.5px;text-align:right;top:972.82px;font-size:12px;font-weight:700;color:#363636;">16.</div>
<div class="t" style="left:1377.5px;top:972.82px;font-size:12.5px;font-weight:400;color:#606060;letter-spacing:-0.1px;-webkit-text-stroke:0.25px #606060;">So</div>
<div class="r" style="left:291px;top:992px;width:1283px;height:25px;background:#eeeeee;"></div>
<div class="r" style="left:291px;top:1017px;width:1283px;height:1px;background:#e0e0e0;"></div>
<div class="t" style="left:295px;width:19.5px;text-align:right;top:997.82px;font-size:12px;font-weight:700;color:#363636;">17.</div>
<div class="t" style="left:320.5px;top:997.82px;font-size:12.5px;font-weight:400;color:#606060;letter-spacing:-0.1px;-webkit-text-stroke:0.25px #606060;">Ne</div>
<div class="t" style="left:974px;width:19.5px;text-align:right;top:997.82px;font-size:12px;font-weight:700;color:#363636;">17.</div>
<div class="t" style="left:999.5px;top:997.82px;font-size:12.5px;font-weight:400;color:#606060;letter-spacing:-0.1px;-webkit-text-stroke:0.25px #606060;">Ne</div>
<div class="t" style="left:1352px;width:19.5px;text-align:right;top:997.82px;font-size:12px;font-weight:700;color:#363636;">17.</div>
<div class="t" style="left:1377.5px;top:997.82px;font-size:12.5px;font-weight:400;color:#606060;letter-spacing:-0.1px;-webkit-text-stroke:0.25px #606060;">Ne</div>
<div class="r" style="left:291px;top:1018px;width:1283px;height:49px;background:#ffffff;"></div>
<div class="r" style="left:291px;top:1067px;width:1283px;height:1px;background:#e0e0e0;"></div>
<div class="t" style="left:295px;width:19.5px;text-align:right;top:1023.82px;font-size:12px;font-weight:700;color:#363636;">18.</div>
<div class="t" style="left:320.5px;top:1023.82px;font-size:12.5px;font-weight:400;color:#606060;letter-spacing:-0.1px;-webkit-text-stroke:0.25px #606060;">Po</div>
<div class="t" style="left:974px;width:19.5px;text-align:right;top:1023.82px;font-size:12px;font-weight:700;color:#363636;">18.</div>
<div class="t" style="left:999.5px;top:1023.82px;font-size:12.5px;font-weight:400;color:#606060;letter-spacing:-0.1px;-webkit-text-stroke:0.25px #606060;">Po</div>
<div class="t" style="left:1352px;width:19.5px;text-align:right;top:1023.82px;font-size:12px;font-weight:700;color:#363636;">18.</div>
<div class="t" style="left:1377.5px;top:1023.82px;font-size:12.5px;font-weight:400;color:#606060;letter-spacing:-0.1px;-webkit-text-stroke:0.25px #606060;">Po</div>
<div class="r" style="left:522px;top:1022.3px;width:141px;height:17.8px;background:#9ec4ab;border-radius:5px;box-shadow:0 1px 2px rgba(0,0,0,0.2);"></div>
<div class="t" style="left:528px;top:1025.94px;font-size:12px;font-weight:400;color:#222;letter-spacing:-0.45px;">07:00 - 19:00</div>
<div class="r" style="left:673px;top:1022.3px;width:141px;height:17.8px;background:#edc1a5;border-radius:5px;box-shadow:0 1px 2px rgba(0,0,0,0.2);"></div>
<div class="t" style="left:679px;top:1025.94px;font-size:12px;font-weight:400;color:#222;letter-spacing:-0.45px;">12:00 - 15:00</div>
<div class="r" style="left:824px;top:1022.3px;width:141px;height:17.8px;background:#edc1a5;border-radius:5px;box-shadow:0 1px 2px rgba(0,0,0,0.2);"></div>
<div class="t" style="left:830px;top:1025.94px;font-size:12px;font-weight:400;color:#222;letter-spacing:-0.45px;">07:00 - 12:00</div>
<div class="r" style="left:824px;top:1045.6px;width:141px;height:17.8px;background:#cde79c;border-radius:5px;box-shadow:0 1px 2px rgba(0,0,0,0.2);"></div>
<div class="t" style="left:830px;top:1049.24px;font-size:12px;font-weight:400;color:#222;letter-spacing:-0.45px;">12:00 - 18:00</div>
<div class="r" style="left:1051px;top:1022.3px;width:141px;height:17.8px;background:#84d5a8;border-radius:5px;box-shadow:0 1px 2px rgba(0,0,0,0.2);"></div>
<div class="t" style="left:1057px;top:1025.94px;font-size:12px;font-weight:400;color:#222;letter-spacing:-0.45px;">07:00 - 15:30</div>
<div class="r" style="left:1202px;top:1022.3px;width:141px;height:17.8px;background:#ababab;border-radius:5px;box-shadow:0 1px 2px rgba(0,0,0,0.2);"></div>
<div class="t" style="left:1208px;top:1025.94px;font-size:12px;font-weight:400;color:#222;letter-spacing:-0.45px;">09:00 - 17:30</div>
<div class="r" style="left:1429px;top:1022.3px;width:141px;height:17.8px;background:#c895ef;border-radius:5px;box-shadow:0 1px 2px rgba(0,0,0,0.2);"></div>
<div class="t" style="left:1435px;top:1025.94px;font-size:12px;font-weight:400;color:#222;letter-spacing:-0.45px;">07:00 - 12:00</div>
<div class="r" style="left:366px;top:275px;width:1px;height:791px;background:#e3e3e3;"></div>
<div class="r" style="left:517px;top:275px;width:1px;height:791px;background:#e3e3e3;"></div>
<div class="r" style="left:668px;top:275px;width:1px;height:791px;background:#e3e3e3;"></div>
<div class="r" style="left:819px;top:275px;width:1px;height:791px;background:#e3e3e3;"></div>
<div class="r" style="left:970px;top:275px;width:1px;height:791px;background:#e3e3e3;"></div>
<div class="r" style="left:1046px;top:275px;width:1px;height:791px;background:#e3e3e3;"></div>
<div class="r" style="left:1197px;top:275px;width:1px;height:791px;background:#e3e3e3;"></div>
<div class="r" style="left:1348px;top:275px;width:1px;height:791px;background:#e3e3e3;"></div>
<div class="r" style="left:1424px;top:275px;width:1px;height:791px;background:#e3e3e3;"></div>
<div class="r" style="left:1907px;top:187px;width:13px;height:880px;background:#f1f1f1;"></div>
<div class="r" style="left:1909px;top:200px;width:9px;height:495px;background:#c1c1c1;"></div>
<svg style="left:1909px;top:190px" width="9" height="6"><path d="M0.5 5 L4.5 1 L8.5 5 Z" fill="#a3a3a3"/></svg>
<svg style="left:1909px;top:1057px" width="9" height="6"><path d="M0.5 1 L4.5 5 L8.5 1 Z" fill="#505050"/></svg>
<div class="r" style="left:262px;top:1067px;width:1645px;height:13px;background:#f1f1f1;"></div>
<div class="r" style="left:1907px;top:1067px;width:13px;height:13px;background:#dcdcdc;"></div>
<svg style="left:266px;top:1069px" width="6" height="9"><path d="M5 0.5 L1 4.5 L5 8.5 Z" fill="#a3a3a3"/></svg>
<svg style="left:1899px;top:1069px" width="6" height="9"><path d="M1 0.5 L5 4.5 L1 8.5 Z" fill="#a3a3a3"/></svg>
<div class="r" style="left:543px;top:343px;width:834px;height:572px;background:#f5f5f5;box-sizing:border-box;border:1px solid #4a4a4a;"></div>
<div class="r" style="left:543px;top:343px;width:834px;height:27px;background:#3c3c3c;"></div>
<svg style="left:547px;top:349px" width="15" height="15" viewBox="0 0 15 15"><g fill="#1ad5b8"><rect x="5" y="0" width="5" height="4.5"/><rect x="0" y="5.5" width="14.5" height="4.5"/><rect x="5" y="10" width="5" height="5"/></g></svg>
<div class="t" style="left:565.5px;top:351.19px;font-size:11px;font-weight:400;color:#e8e8e8;letter-spacing:-0.15px;">Window - Google Chrome</div>
<div class="r" style="left:1272px;top:356px;width:9px;height:1px;background:#e0e0e0;"></div>
<div class="r" style="left:1312px;top:352px;width:9px;height:9px;box-sizing:border-box;border:1.2px solid #e0e0e0;"></div>
<svg style="left:1351px;top:351px" width="11" height="11"><path d="M1 1 L10 10 M10 1 L1 10" stroke="#e8e8e8" stroke-width="1.2"/></svg>
<div class="r" style="left:544px;top:370px;width:832px;height:23px;background:#f1f3f4;"></div>
<div class="r" style="left:544px;top:392px;width:832px;height:4px;background:linear-gradient(#dcdcdc,#c8c8c8);"></div>
<svg style="left:555px;top:376px" width="9" height="11" viewBox="0 0 9 11"><path d="M2 5 V3.5 A2.5 2.5 0 0 1 7 3.5 V5" fill="none" stroke="#5f6368" stroke-width="1.3"/><rect x="0.8" y="4.8" width="7.4" height="5.6" rx="0.8" fill="#5f6368"/></svg>
<div class="t" style="left:574px;top:376.14px;font-size:12px;color:#6a6a6a;letter-spacing:0.23px;"><span style="color:#202124">test.tamed.cz</span>/window.php?checked=&amp;modul=print&amp;publish=reports&amp;action=get&amp;action_next=get&amp;printer=false&amp;prefix=admin_&amp;thread_id...</div>
<svg style="left:1354px;top:376px" width="13" height="13" viewBox="0 0 13 13"><g fill="none" stroke="#5f6368" stroke-width="1.3"><circle cx="5.3" cy="5.3" r="4.3"/><path d="M8.5 8.5 L12 12 M5.3 3 V7.6 M3 5.3 H7.6"/></g></svg>
<div class="r" style="left:544px;top:396px;width:832px;height:28px;background:linear-gradient(90deg,#1a5a62 0%,#116e6d 35%,#07877c 70%,#03978a 100%);"></div>
<div class="r" style="left:544px;top:424px;width:832px;height:65.5px;background:#f6e84a;"></div>
<div class="r" style="left:561px;top:442px;width:164px;height:29px;box-sizing:border-box;background:#f1e368;border:1px solid #e6d84a;border-right:none;"></div>
<div class="t" style="left:567px;top:450.15px;font-size:14px;font-weight:400;color:#8e8a5e;letter-spacing:-0.25px;">Vyhledávání</div>
<div class="r" style="left:725px;top:442px;width:64.5px;height:29px;background:#e0d23a;"></div>
<div class="t" style="left:741.5px;top:450.15px;font-size:14px;font-weight:400;color:#222;letter-spacing:-0.1px;">reset</div>
<div class="r" style="left:813px;top:442px;width:1px;height:30px;background:#e9db48;"></div>
<div class="t" style="left:835px;top:450.15px;font-size:14px;font-weight:700;color:#111;letter-spacing:-0.35px;">TYP VÝSTUPU:</div>
<div class="r" style="left:1000px;top:441px;width:1px;height:31px;background:#e9db48;"></div>
<svg style="left:1313.5px;top:441px" width="33" height="33" viewBox="0 0 33 33"><circle cx="16.5" cy="16.5" r="16.5" fill="#d3c72b"/><path d="M9.5 10 H24 L18 17 V23.5 L15 25 V17 Z" fill="none" stroke="#efe24a" stroke-width="1.3"/></svg>
<div class="r" style="left:544px;top:489.5px;width:832px;height:47.5px;background:linear-gradient(#fff 0,#fff 85%,#f4f4f4 100%);"></div>
<div class="r" style="left:544px;top:537px;width:832px;height:1px;background:#d6d6d6;"></div>
<svg style="left:564px;top:515px" width="7" height="8"><path d="M1.2 1.2 L5.2 4 L1.2 6.8" fill="none" stroke="#333" stroke-width="2"/></svg>
<div class="t" style="left:582px;top:512.65px;font-size:14px;font-weight:700;color:#111;letter-spacing:-0.2px;">Vyberte tiskovou sestavu</div>
<div class="r" style="left:544px;top:489.5px;width:832px;height:11px;background:linear-gradient(rgba(40,40,60,0.16),rgba(0,0,0,0.05) 40%,rgba(0,0,0,0));"></div>
<div class="r" style="left:1361px;top:539px;width:15px;height:375px;background:#f0f0f0;"></div>
<svg style="left:1365px;top:542px" width="8" height="5"><path d="M0.5 4.5 L4 0.8 L7.5 4.5 Z" fill="#a0a0a0"/></svg>
<svg style="left:1365px;top:903px" width="8" height="5"><path d="M0.5 0.5 L4 4.2 L7.5 0.5 Z" fill="#a0a0a0"/></svg>
<div class="r" style="left:603.5px;top:578px;width:5.5px;height:5.5px;background:#1f4f73;border-radius:50%;"></div>
<div class="t" style="left:620px;top:571.41px;font-size:17px;font-weight:400;color:#24597f;letter-spacing:0px;">Přehled služeb (.csv)</div>
<div class="r" style="left:543px;top:343px;width:1px;height:572px;background:#4a4a4a;"></div>
<div class="r" style="left:1376px;top:343px;width:1px;height:572px;background:#4a4a4a;"></div>
<div class="r" style="left:543px;top:913.5px;width:834.5px;height:1.5px;background:#4a4a4a;"></div>
<svg style="left:0;top:0" width="1920" height="1080"><path d="M786.7 591.3 L892.5 702.5" stroke="#000" stroke-width="2"/></svg>
<div class="r" style="left:892px;top:702px;width:391px;height:198px;box-sizing:border-box;background:#fdc931;border:2.2px solid #000;"></div>
<div class="t" style="left:1087.5px;top:721.07px;font-size:33px;color:#000;letter-spacing:0.25px;transform:translateX(-50%);">Kliknutím stáhneme</div>
<div class="t" style="left:1087.5px;top:763.77px;font-size:33px;color:#000;letter-spacing:0.16px;transform:translateX(-50%);">přehledovou tabulku ve</div>
<div class="t" style="left:1087.5px;top:806.47px;font-size:33px;color:#000;letter-spacing:0px;transform:translateX(-50%);">formátu .csv vhodný</div>
<div class="t" style="left:1087.5px;top:849.17px;font-size:33px;color:#000;letter-spacing:-0.6px;transform:translateX(-50%);">např. pro Excel</div>
</body></html>
